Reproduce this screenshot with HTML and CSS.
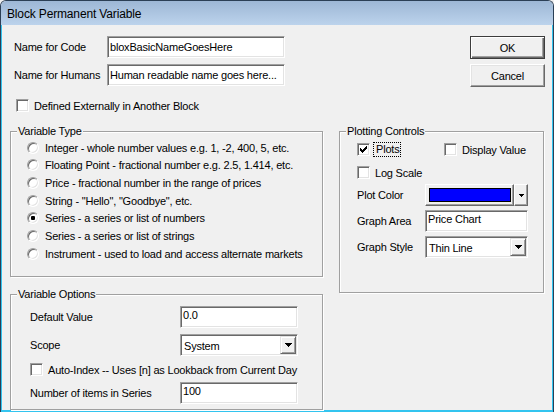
FILE: index.html
```html
<!DOCTYPE html>
<html>
<head>
<meta charset="utf-8">
<title>Block Permanent Variable</title>
<link rel="stylesheet" href="styles.css">
</head>
<body>
<div class="window">
  <div class="titlebar">Block Permanent Variable</div>
  <div class="client">
    <div class="top">
      <div class="names">
        <span class="lbl">Name for Code</span>
        <div class="field mid">bloxBasicNameGoesHere</div>
        <span class="lbl">Name for Humans</span>
        <div class="field mid">Human readable name goes here...</div>
      </div>
      <div class="buttons">
        <div class="btn default">OK</div>
        <div class="btn">Cancel</div>
      </div>
    </div>

    <div class="check-row ext"><span class="checkbox"></span><span>Defined Externally in Another Block</span></div>

    <div class="main">
      <div class="left-col">
        <div class="group vt">
          <div class="legend">Variable Type</div>
          <div class="radios">
            <div class="radio-row"><span class="radio"></span><span>Integer - whole number values e.g. 1, -2, 400, 5, etc.</span></div>
            <div class="radio-row"><span class="radio"></span><span>Floating Point - fractional number e.g. 2.5, 1.414, etc.</span></div>
            <div class="radio-row"><span class="radio"></span><span>Price - fractional number in the range of prices</span></div>
            <div class="radio-row"><span class="radio"></span><span>String - "Hello", "Goodbye", etc.</span></div>
            <div class="radio-row"><span class="radio on"></span><span>Series - a series or list of numbers</span></div>
            <div class="radio-row"><span class="radio"></span><span>Series - a series or list of strings</span></div>
            <div class="radio-row"><span class="radio"></span><span>Instrument - used to load and access alternate markets</span></div>
          </div>
        </div>

        <div class="group vo">
          <div class="legend">Variable Options</div>
          <div class="vo-body">
            <div class="form-row">
              <span>Default Value</span>
              <div class="field top">0.0</div>
            </div>
            <div class="form-row r2">
              <span>Scope</span>
              <div class="combo"><span class="val">System</span><span class="dd"><svg width="7" height="4" viewBox="0 0 7 4"><path d="M0 0h7v1h-1v1h-1v1h-1v1h-1v-1h-1v-1h-1v-1h-1z"/></svg></span></div>
            </div>
            <div class="check-row auto"><span class="checkbox"></span><span>Auto-Index -- Uses [n] as Lookback from Current Day</span></div>
            <div class="form-row r4">
              <span>Number of items in Series</span>
              <div class="field top">100</div>
            </div>
          </div>
        </div>
      </div>

      <div class="group pc">
        <div class="legend">Plotting Controls</div>
        <div class="pc-body">
          <div class="pc-checks">
            <div class="check-row plots"><span class="checkbox"><svg width="7" height="7" viewBox="0 0 7 7"><path d="M0 2h1v3h-1z M1 3h1v3h-1z M2 4h1v3h-1z M3 3h1v3h-1z M4 2h1v3h-1z M5 1h1v3h-1z M6 0h1v3h-1z"/></svg></span><span class="focus">Plots</span></div>
            <div class="check-row"><span class="checkbox"></span><span>Display Value</span></div>
          </div>
          <div class="check-row log"><span class="checkbox"></span><span>Log Scale</span></div>
          <div class="pc-form">
            <span>Plot Color</span>
            <div class="colorpick">
              <div class="swatch-btn"><div class="swatch"></div></div>
              <div class="cdrop"><svg width="5" height="3" viewBox="0 0 5 3"><path d="M0 0h5v1h-1v1h-1v1h-1v-1h-1v-1h-1z"/></svg></div>
            </div>
            <span>Graph Area</span>
            <div class="field top">Price Chart</div>
            <span>Graph Style</span>
            <div class="combo"><span class="val">Thin Line</span><span class="dd"><svg width="7" height="4" viewBox="0 0 7 4"><path d="M0 0h7v1h-1v1h-1v1h-1v1h-1v-1h-1v-1h-1v-1h-1z"/></svg></span></div>
          </div>
        </div>
      </div>
    </div>
  </div>
</div>
</body>
</html>
```

FILE: styles.css
```css
* { box-sizing: border-box; }

html, body {
  margin: 0;
  padding: 0;
}

body {
  width: 554px;
  height: 412px;
  overflow: hidden;
  background: #f0f0f0;
  font-family: "Liberation Sans", Arial, sans-serif;
  font-size: 11px;
  letter-spacing: -0.2px;
  color: #000;
}

.window {
  width: 554px;
  height: 412px;
  border: 1px solid #2b3f55;
  border-bottom: none;
  border-radius: 6px 6px 0 0;
  overflow: hidden;
  display: flex;
  flex-direction: column;
  background: #f0f0f0;
}

.titlebar {
  height: 24px;
  flex: none;
  background: linear-gradient(#9db7d5, #bcd3ec);
  display: flex;
  align-items: center;
  padding: 1px 0 0 6px;
  font-size: 12px;
  letter-spacing: -0.15px;
  color: #000;
}

.client {
  flex: 1;
  border-style: solid;
  border-color: #33c4ef;
  border-width: 0 1px 2px 1px;
}

/* ---- top area ---- */
.top {
  display: flex;
  padding: 11px 7px 0 12px;
}

.names {
  display: grid;
  grid-template-columns: 93px 178px;
  grid-auto-rows: 22px;
  row-gap: 6px;
  align-items: center;
}

.buttons {
  margin-left: auto;
  display: flex;
  flex-direction: column;
  gap: 5px;
}

.btn {
  width: 75px;
  height: 23px;
  display: flex;
  align-items: center;
  justify-content: center;
  background: #f0f0f0;
  border: 1px solid;
  border-color: #fff #696969 #696969 #fff;
  box-shadow: inset -1px -1px 0 #a0a0a0, inset 1px 1px 0 #e3e3e3;
}

.btn.default {
  border: 1px solid #3c3c3c;
  box-shadow: inset 1px 1px 0 #fff, inset -1px -1px 0 #696969, inset -2px -2px 0 #a0a0a0;
}

/* ---- generic controls ---- */
.field {
  height: 22px;
  background: #fff;
  border: 1px solid;
  border-color: #a0a0a0 #fff #fff #a0a0a0;
  box-shadow: inset 1px 1px 0 #696969, inset -1px -1px 0 #e3e3e3;
  padding: 0 0 0 2px;
  white-space: nowrap;
  overflow: hidden;
}

.field.mid {
  display: flex;
  align-items: center;
}

.field.top {
  padding-top: 2px;
  line-height: 13px;
}

.check-row {
  display: flex;
  align-items: center;
  gap: 5px;
  height: 13px;
  white-space: nowrap;
}

.checkbox {
  width: 13px;
  height: 13px;
  flex: none;
  display: inline-flex;
  align-items: center;
  justify-content: center;
  background: #fff;
  border: 1px solid;
  border-color: #a0a0a0 #fff #fff #a0a0a0;
  box-shadow: inset 1px 1px 0 #696969, inset -1px -1px 0 #e3e3e3;
}

.checkbox svg {
  display: block;
  fill: #000;
}

.radio {
  width: 12px;
  height: 12px;
  flex: none;
  border-radius: 50%;
  background: #fff;
  border: 1px solid;
  border-color: #a0a0a0 #fff #fff #a0a0a0;
  box-shadow: inset 1px 1px 0 #696969, inset -1px -1px 0 #e3e3e3;
  display: inline-flex;
  align-items: center;
  justify-content: center;
}

.radio.on::after {
  content: "";
  width: 4px;
  height: 4px;
  border-radius: 1px;
  background: #000;
}

.combo {
  height: 22px;
  display: flex;
  align-items: stretch;
  background: #fff;
  border: 1px solid;
  border-color: #a0a0a0 #fff #fff #a0a0a0;
  box-shadow: inset 1px 1px 0 #696969, inset -1px -1px 0 #e3e3e3;
  padding: 1px;
}

.combo .val {
  flex: 1;
  display: flex;
  align-items: center;
  padding-left: 2px;
  padding-top: 1px;
}

.combo .dd {
  width: 16px;
  display: flex;
  align-items: center;
  justify-content: center;
  background: #f0f0f0;
  border: 1px solid;
  border-color: #e3e3e3 #696969 #696969 #e3e3e3;
  box-shadow: inset 1px 1px 0 #fff, inset -1px -1px 0 #a0a0a0;
}

.combo .dd svg,
.cdrop svg {
  display: block;
  fill: #000;
}

/* ---- group boxes ---- */
.main {
  display: grid;
  grid-template-columns: 313px 205px;
  column-gap: 16px;
  margin: 19px 0 0 8px;
  align-items: start;
}

.left-col {
  display: flex;
  flex-direction: column;
  gap: 17px;
}

.group {
  border: 1px solid #a0a0a0;
  box-shadow: inset 1px 1px 0 #fff, 1px 1px 0 #fff;
}

.legend {
  display: table;
  margin: -7px 0 0 6px;
  padding: 0 1px;
  background: #f0f0f0;
  line-height: 13px;
}

.vt { height: 146px; }
.vo { height: 116px; }
.pc { height: 162px; }

.radios {
  margin-top: 1px;
  padding-left: 16px;
}

.radio-row {
  height: 17.67px;
  display: flex;
  align-items: center;
  gap: 6px;
  white-space: nowrap;
}

.vo-body {
  padding: 5px 0 0 19px;
}

.form-row {
  display: grid;
  grid-template-columns: 150px 118px;
  height: 22px;
  align-items: center;
}

.form-row.r2 { margin-top: 6px; }
.check-row.auto { margin-top: 7px; }
.form-row.r4 { margin-top: 6px; }

.ext {
  margin: 12px 0 0 14px;
}

/* ---- plotting controls ---- */
.pc-body {
  padding: 5px 0 0 17px;
}

.pc-checks {
  display: flex;
}

.pc-checks .plots {
  width: 87px;
  gap: 3px;
}

.focus {
  border: 1px dotted #000;
  padding: 0 1px 0 2px;
  line-height: 13px;
}

.check-row.log {
  margin-top: 10px;
}

.pc-form {
  margin-top: 5px;
  display: grid;
  grid-template-columns: 68px 103px;
  grid-auto-rows: 22px;
  row-gap: 4px;
  align-items: center;
}

.colorpick {
  height: 22px;
  display: flex;
}

.swatch-btn {
  flex: 1;
  background: #f0f0f0;
  border: 1px solid;
  border-color: #fff #696969 #696969 #fff;
  box-shadow: inset -1px -1px 0 #a0a0a0;
  padding: 3px 2px 3px 3px;
}

.swatch {
  height: 100%;
  background: #0000ff;
  border: 1px solid #000;
}

.cdrop {
  width: 14px;
  display: flex;
  align-items: center;
  justify-content: center;
  background: #f0f0f0;
  border: 1px solid;
  border-color: #fff #696969 #696969 #fff;
  box-shadow: inset -1px -1px 0 #a0a0a0;
}
```
